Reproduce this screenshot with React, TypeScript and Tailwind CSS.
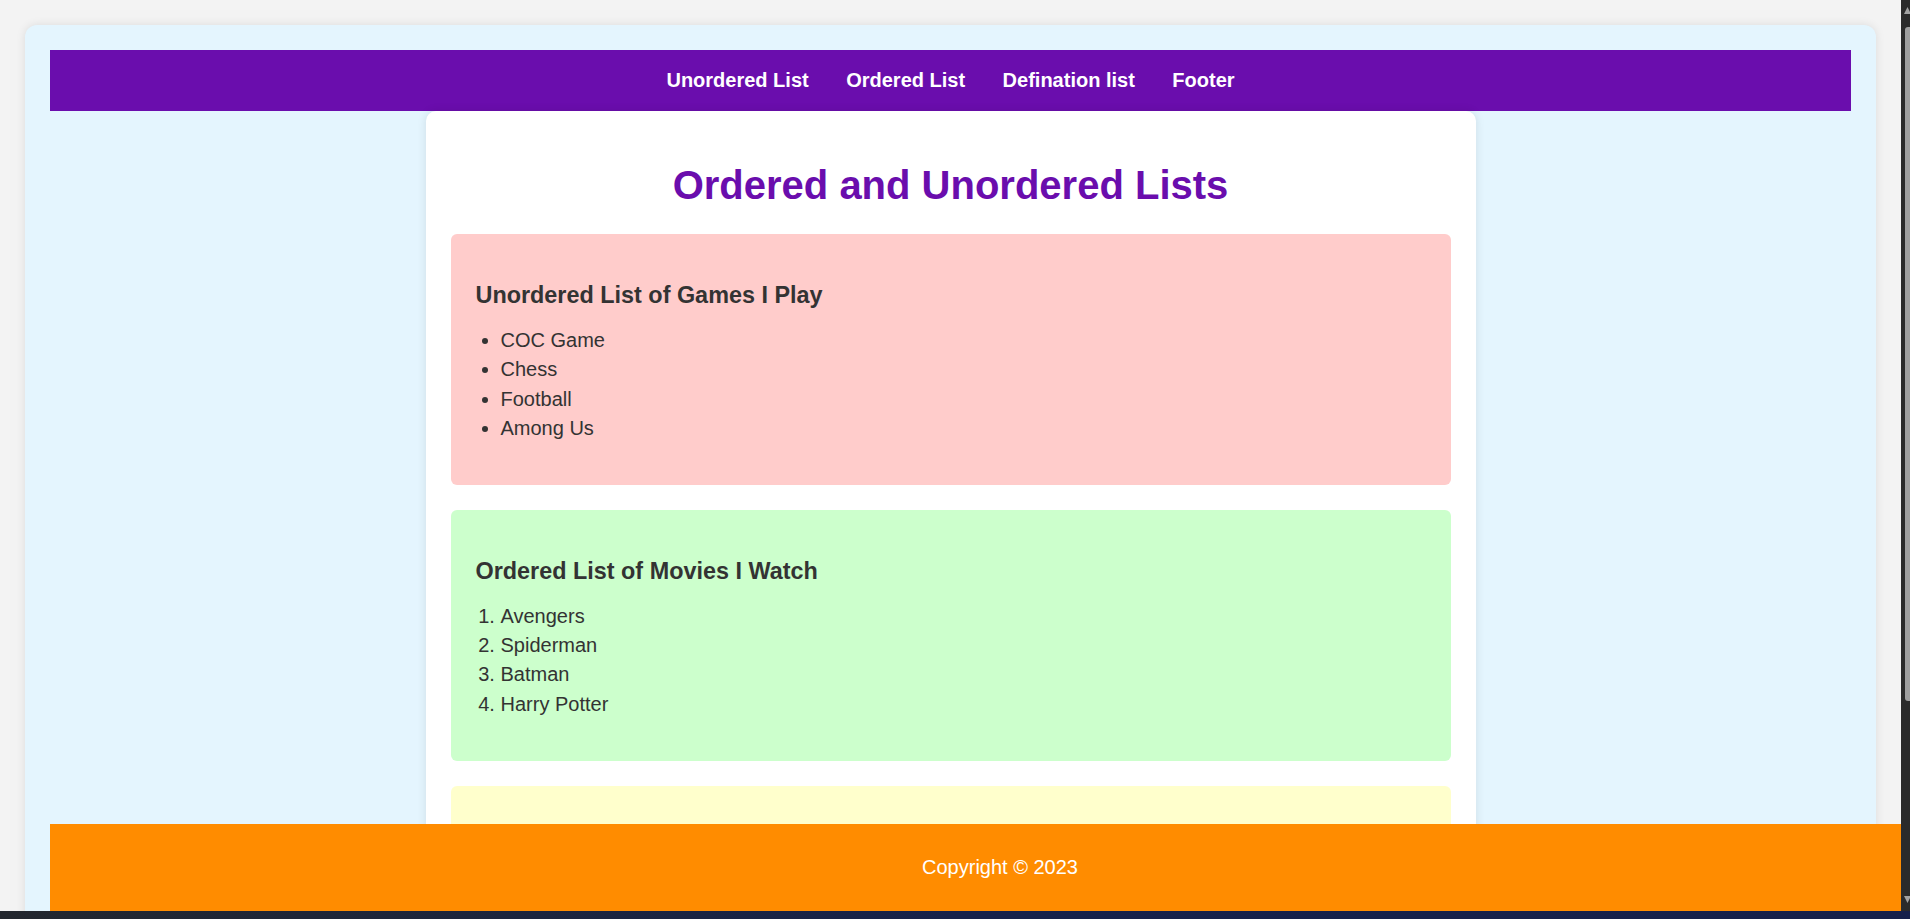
import React from 'react';

const games = ['COC Game', 'Chess', 'Football', 'Among Us'];
const movies = ['Avengers', 'Spiderman', 'Batman', 'Harry Potter'];
const links = ['Unordered List', 'Ordered List', 'Defination list', 'Footer'];

function Section({ color, title, children }: { color: string; title: string; children: React.ReactNode }) {
  return (
    <div className={`${color} rounded-[6px] px-[25px] pt-[25px] pb-[25px] mb-[25px]`}>
      <h3 className="text-[23.4px] font-bold leading-[27px] mt-[23px] mb-[20px]">{title}</h3>
      {children}
    </div>
  );
}

export default function App() {
  return (
    <div className="w-[1910px] h-[919px] overflow-hidden flex flex-col bg-[#f3f3f3] font-['Liberation_Sans',Arial,sans-serif] text-[#333]">
      <div className="flex h-[911px]">
        {/* page area */}
        <div className="relative flex-1 overflow-hidden px-[25px] pt-[25px]">
          <div className="bg-[#e4f5fe] rounded-[12px] shadow-[0_0_10px_rgba(0,0,0,0.1)] px-[25px] pt-[25px] h-[1200px]">
            <nav className="h-[61px] bg-[#6a0dad] flex items-center justify-center gap-[37.5px]">
              {links.map((l) => (
                <a key={l} href="#" className="text-white font-bold text-[20px] leading-[23px]">
                  {l}
                </a>
              ))}
            </nav>

            <main className="w-[1050px] mx-auto bg-white rounded-[10px] shadow-[0_0_10px_rgba(0,0,0,0.1)] px-[25px] pt-[51px] pb-[25px]">
              <h1 className="text-center text-[40px] leading-[46px] font-bold text-[#6a0dad] mb-[26px]">
                Ordered and Unordered Lists
              </h1>

              <Section color="bg-[#ffcccb]" title="Unordered List of Games I Play">
                <ul className="list-disc pl-[25px] mb-[20px] text-[20px] leading-[23px]">
                  {games.map((g, i) => (
                    <li key={g} className={i < games.length - 1 ? 'mb-[6.25px]' : ''}>
                      {g}
                    </li>
                  ))}
                </ul>
              </Section>

              <Section color="bg-[#ccffcc]" title="Ordered List of Movies I Watch">
                <ol className="list-decimal pl-[25px] mb-[20px] text-[20px] leading-[23px]">
                  {movies.map((m, i) => (
                    <li key={m} className={i < movies.length - 1 ? 'mb-[6.25px]' : ''}>
                      {m}
                    </li>
                  ))}
                </ol>
              </Section>

              {/* definition list box, its content sits under the fixed footer */}
              <div className="bg-[#ffffcc] rounded-[6px] h-[250px] mb-[25px]" />
            </main>
          </div>

          {/* fixed footer */}
          <footer className="absolute left-[50px] bottom-0 w-[1900px] h-[87px] bg-[#ff8c00] flex items-center justify-center">
            <p className="text-white text-[20px] leading-[23px]">Copyright © 2023</p>
          </footer>
        </div>

        {/* scrollbar */}
        <div className="relative w-[9px] bg-[#2b2b2b]">
          <svg className="absolute left-[3px] top-[7px]" width="7" height="7" viewBox="0 0 7 7">
            <polygon points="3.5,0 7,7 0,7" fill="#a3a3a3" />
          </svg>
          <div className="absolute left-[4px] top-[27px] w-[6px] h-[674px] rounded-l-[3px] bg-[#9f9f9f]" />
          <svg className="absolute left-[3px] top-[896px]" width="7" height="7" viewBox="0 0 7 7">
            <polygon points="0,0 7,0 3.5,7" fill="#a3a3a3" />
          </svg>
        </div>
      </div>

      {/* taskbar strip */}
      <div className="h-[8px] bg-gradient-to-r from-[#23272e] via-[#17224a] to-[#16204a]" />
    </div>
  );
}
